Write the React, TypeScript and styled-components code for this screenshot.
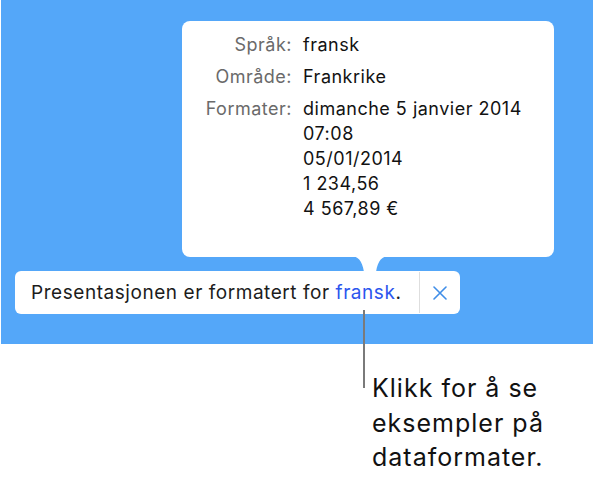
import React from 'react';
import styled, { createGlobalStyle } from 'styled-components';

const GlobalStyle = createGlobalStyle`
	html, body {
		margin: 0;
		padding: 0;
		background: #ffffff;
		font-family: Inter, 'Liberation Sans', Arial, sans-serif;
	}
`;

const Page = styled.div`
	width: 593px;
	height: 486px;
	position: relative;
	overflow: hidden;
`;

const Stage = styled.div`
	height: 344px;
	margin-left: 1px;
	background: #54a7f9;
	padding-top: 21px;
	box-sizing: border-box;
	display: flex;
	flex-direction: column;
`;

const Popover = styled.div`
	position: relative;
	margin-left: 181px;
	width: 372px;
	height: 236px;
	box-sizing: border-box;
	padding-top: 11px;
	background: #ffffff;
	border-radius: 8px;
	display: grid;
	grid-template-columns: 110px auto;
	column-gap: 11px;
	row-gap: 7px;
	align-content: start;
	font-size: 18px;
	line-height: 25px;
	letter-spacing: 0.5px;
`;

const Arrow = styled.svg`
	position: absolute;
	left: 168px;
	top: 235px;
	width: 40px;
	height: 16px;
`;

const Label = styled.div`
	text-align: right;
	color: #6a6a6a;
`;

const Value = styled.div`
	color: #121212;
`;

const Bar = styled.div`
	margin-top: 14px;
	margin-left: 14px;
	width: 445px;
	height: 43px;
	background: #ffffff;
	border-radius: 6px;
	display: flex;
	align-items: stretch;
	position: relative;
`;

const Message = styled.div`
	flex: 1;
	display: flex;
	align-items: center;
	padding-left: 16px;
	font-size: 19px;
	letter-spacing: 0.55px;
	color: #1c1c1c;
	white-space: nowrap;
`;

const Link = styled.span`
	color: #2c56ee;
`;

const Close = styled.div`
	width: 40px;
	border-left: 1px solid #dedede;
	margin: 1px 0;
	display: flex;
	align-items: center;
	justify-content: center;
`;

const Leader = styled.div`
	position: absolute;
	left: 363px;
	top: 310px;
	width: 2px;
	height: 78px;
	background: #7a7a7a;
`;

const Callout = styled.div`
	margin: 27px 0 0 372px;
	font-size: 25px;
	line-height: 34.5px;
	letter-spacing: 1px;
	color: #111111;
`;

const rows: { label: string; values: string[] }[] = [
	{ label: 'Språk:', values: ['fransk'] },
	{ label: 'Område:', values: ['Frankrike'] },
	{
		label: 'Formater:',
		values: ['dimanche 5 janvier 2014', '07:08', '05/01/2014', '1 234,56', '4 567,89 €'],
	},
];

export default function App() {
	return (
		<Page>
			<GlobalStyle />
			<Stage>
				<Popover>
					{rows.map((row) => (
						<React.Fragment key={row.label}>
							<Label>{row.label}</Label>
							<Value>
								{row.values.map((v) => (
									<div key={v}>{v}</div>
								))}
							</Value>
						</React.Fragment>
					))}
					<Arrow viewBox="0 0 40 16">
						<path d="M0 0 C8 0 12 4 14 16 L26 16 C28 4 32 0 40 0 Z" fill="#ffffff" />
					</Arrow>
				</Popover>
				<Bar>
					<Message>
						Presentasjonen er formatert for&nbsp;<Link>fransk</Link>.
					</Message>
					<Close>
						<svg width="14" height="14" viewBox="0 0 14 14">
							<path d="M1 1 L13 13 M13 1 L1 13" stroke="#3f8ee8" strokeWidth="1.6" strokeLinecap="round" />
						</svg>
					</Close>
				</Bar>
			</Stage>
			<Leader />
			<Callout>
				Klikk for å se
				<br />
				eksempler på
				<br />
				dataformater.
			</Callout>
		</Page>
	);
}
